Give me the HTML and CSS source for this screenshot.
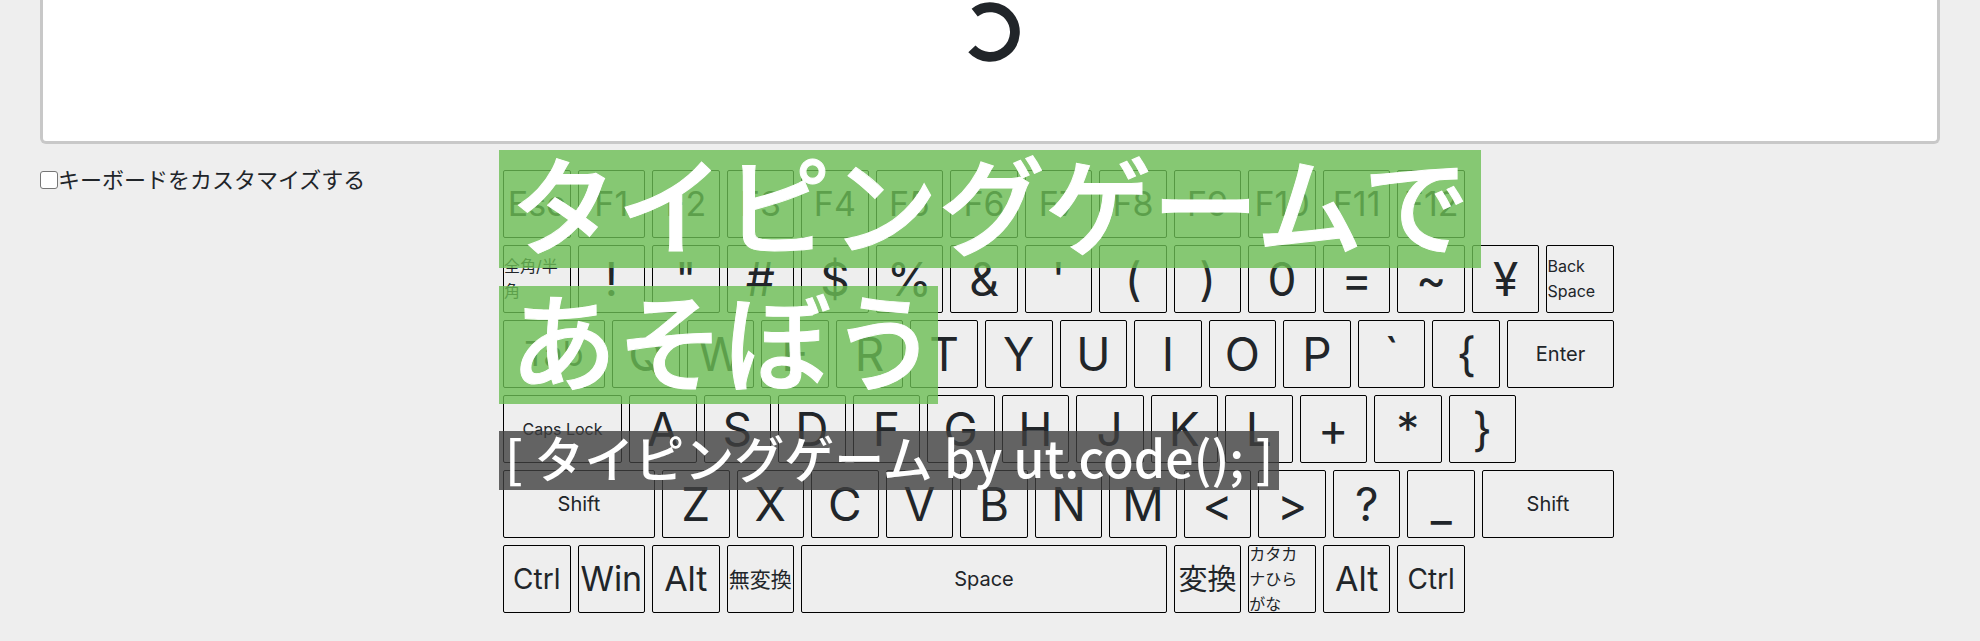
FILE: index.html
```html
<!DOCTYPE html>
<html lang="ja">
<head>
<meta charset="utf-8">
<title>タイピングゲーム</title>
<link rel="stylesheet" href="styles.css">
</head>
<body>
<main class="page">
  <section class="screen">
    <svg class="spinner" viewBox="-30 -30 60 60" role="img" aria-label="Loading">
      <path d="M-15.3 -19.4A24.8 24.8 0 1 1 -18.1 16.9" fill="none" stroke="#212529" stroke-width="9.8"/>
    </svg>
  </section>
  <div class="controls">
    <label class="customize"><input class="customize-box" type="checkbox">キーボードをカスタマイズする</label>
    <div class="keyboard">
      <div class="row">
        <span class="key md">Esc</span><span class="key md">F1</span><span class="key md">F2</span><span class="key md">F3</span><span class="key md">F4</span><span class="key md">F5</span><span class="key md">F6</span><span class="key md">F7</span><span class="key md">F8</span><span class="key md">F9</span><span class="key md">F10</span><span class="key md">F11</span><span class="key md">F12</span>
      </div>
      <div class="row">
        <span class="key xs">全角/半角</span><span class="key">!</span><span class="key">"</span><span class="key">#</span><span class="key">$</span><span class="key">%</span><span class="key">&amp;</span><span class="key">'</span><span class="key">(</span><span class="key">)</span><span class="key">0</span><span class="key">=</span><span class="key">~</span><span class="key">¥</span><span class="key xs">Back Space</span>
      </div>
      <div class="row row-tab">
        <span class="key md">Tab</span><span class="key">Q</span><span class="key">W</span><span class="key">E</span><span class="key">R</span><span class="key">T</span><span class="key">Y</span><span class="key">U</span><span class="key">I</span><span class="key">O</span><span class="key">P</span><span class="key">`</span><span class="key">{</span><span class="key sm">Enter</span>
      </div>
      <div class="row row-caps">
        <span class="key xs">Caps Lock</span><span class="key">A</span><span class="key">S</span><span class="key">D</span><span class="key">F</span><span class="key">G</span><span class="key">H</span><span class="key">J</span><span class="key">K</span><span class="key">L</span><span class="key">+</span><span class="key">*</span><span class="key">}</span>
      </div>
      <div class="row row-shift">
        <span class="key sm">Shift</span><span class="key">Z</span><span class="key">X</span><span class="key">C</span><span class="key">V</span><span class="key">B</span><span class="key">N</span><span class="key">M</span><span class="key">&lt;</span><span class="key">&gt;</span><span class="key">?</span><span class="key">_</span><span class="key sm">Shift</span>
      </div>
      <div class="row">
        <span class="key ctrl">Ctrl</span><span class="key md">Win</span><span class="key md">Alt</span><span class="key muhenkan">無変換</span><span class="key sm space">Space</span><span class="key henkan">変換</span><span class="key xs kana">カタカナひらがな</span><span class="key md">Alt</span><span class="key ctrl">Ctrl</span>
      </div>
    </div>
  </div>
  <header class="hero">
    <div class="hero-inner">
      <h1 class="title"><span class="title-line">タイピングゲームで</span><span class="title-line title-end">あそぼう</span></h1>
      <p class="subtitle">[ タイピングゲーム by ut.code(); ]</p>
    </div>
  </header>
</main>
</body>
</html>
```
FILE: styles.css
```css
* {
  box-sizing: border-box;
}

body {
  margin: 0;
  background: #eee;
  color: #212529;
  font-family: Inter, "Noto Sans CJK JP", sans-serif;
}

.page {
  position: relative;
  padding: 0 40px 28px;
}

.screen {
  display: flex;
  justify-content: center;
  padding: 2px 0 79px;
  background: #fff;
  border: 3px solid #c8c8c8;
  border-top: 0;
  border-radius: 0 0 6px 6px;
}

.spinner {
  width: 60px;
  height: 60px;
}

.controls {
  display: flex;
  align-items: flex-start;
  padding-top: 26px;
}

.customize {
  display: flex;
  align-items: center;
  flex: 0 1 463px;
  font-size: 22px;
  line-height: 20px;
}

.customize-box {
  appearance: none;
  width: 18px;
  height: 18px;
  margin: 0;
  background: #fff;
  border: 1px solid #767676;
  border-radius: 3px;
}

.keyboard {
  display: grid;
  flex: 0 1 1111px;
  gap: 7px;
}

.row {
  display: grid;
  grid-template-columns: repeat(15, minmax(0, 1fr));
  grid-auto-rows: 68px;
  gap: 7px;
}

.row-tab {
  grid-template-columns: 102px repeat(12, minmax(0, 1fr)) 107px;
}

.row-caps {
  grid-template-columns: 119px repeat(12, minmax(0, 1fr)) 91px;
}

.row-shift {
  grid-template-columns: 152px repeat(11, minmax(0, 1fr)) 132px;
}

.key {
  display: flex;
  align-items: center;
  justify-content: center;
  border: 1px solid #000;
  border-radius: 2px;
  font-size: 46px;
  line-height: 1;
}

.md {
  font-size: 34px;
}

.ctrl {
  font-size: 28px;
}

.henkan {
  font-size: 29px;
}

.muhenkan {
  font-size: 21px;
}

.sm {
  font-size: 20px;
}

.xs {
  font-size: 16px;
  line-height: 25px;
}

.kana {
  padding-right: 4px;
}

.space {
  grid-column: span 5;
}

.hero {
  position: absolute;
  top: 150px;
  left: 0;
  right: 0;
  display: flex;
  justify-content: center;
  color: #fff;
  font-family: "Noto Sans CJK JP", sans-serif;
}

.hero-inner,
.title {
  display: flex;
  flex-direction: column;
  align-items: flex-start;
}

.title {
  gap: 18px;
  margin: 0;
  font-size: 107px;
  font-weight: 500;
  line-height: 102px;
  -webkit-text-stroke: 1px #fff;
}

.title-line {
  padding: 0 11px 16px;
  background: rgba(107, 190, 84, 0.8);
}

.title-end {
  padding-right: 0;
}

.subtitle {
  margin: 27px 0 0;
  padding: 0 6px 8px;
  background: rgba(64, 64, 64, 0.8);
  font-size: 50px;
  font-weight: 500;
  line-height: 51px;
}
```
